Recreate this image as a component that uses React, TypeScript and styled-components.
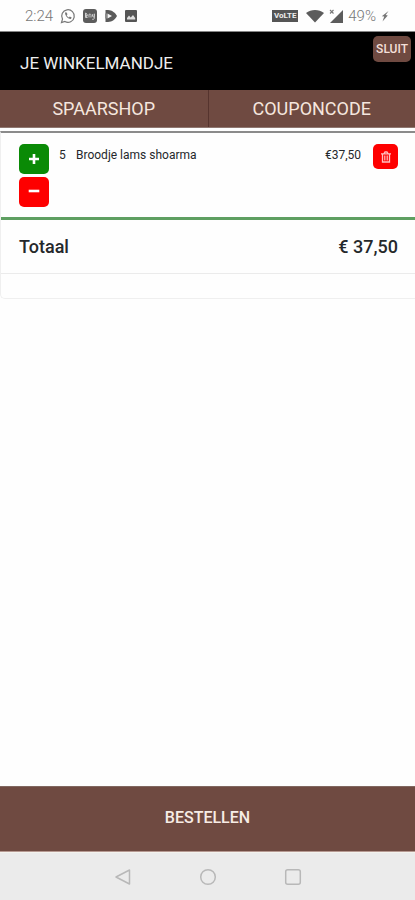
import React from "react";
import styled, { createGlobalStyle } from "styled-components";

const brown = "#6f4a41";

const GlobalStyle = createGlobalStyle`
  *, *::before, *::after { box-sizing: border-box; }
  body {
    margin: 0;
    background: #fefefe;
    color: #25282b;
    font-family: Roboto, "Liberation Sans", sans-serif;
  }
  button { font-family: inherit; cursor: pointer; }
`;

const Screen = styled.div`
  display: flex;
  flex-direction: column;
  min-height: 100vh;
`;

const StatusBar = styled.div`
  display: flex;
  justify-content: space-between;
  align-items: center;
  height: 32px;
  padding: 0 26px 0 25px;
  border-bottom: 1px solid #858585;
  background: #fefefe;
  color: #777;
  font-size: 15px;
  font-weight: 300;
`;

const StatusGroup = styled.div<{ $gap: number }>`
  display: flex;
  align-items: center;
  gap: ${(p) => p.$gap}px;
  svg { display: block; }
`;

const Header = styled.header`
  display: flex;
  justify-content: space-between;
  align-items: flex-start;
  height: 58px;
  padding: 4px 4px 0 20px;
  background: #000;
`;

const Title = styled.h1`
  margin: 16px 0 0;
  color: #eee;
  font-size: 17px;
  line-height: 22px;
  font-weight: 400;
`;

const CloseButton = styled.button`
  height: 26px;
  padding: 0 3px;
  border: 0;
  border-radius: 5px;
  background: ${brown};
  color: #f3dfd8;
  font-size: 12px;
  font-weight: 500;
`;

const Tabs = styled.nav`
  display: grid;
  grid-template-columns: 1fr 1fr;
  border-bottom: 1px solid #8f7770;
`;

const TabButton = styled.button`
  height: 37px;
  padding: 0;
  border: 0;
  background: ${brown};
  color: #f5e6de;
  font-size: 18px;
  & + & { border-left: 1px solid #56342e; }
`;

const Card = styled.section`
  margin-top: 3px;
  border: 1px solid #efefef;
  border-top: 2px solid #8b8b8b;
  border-right: 0;
  border-radius: 0 0 0 5px;
  background: #fefefe;
`;

const ItemRow = styled.div`
  display: flex;
  align-items: flex-start;
  min-height: 84px;
  padding: 11px 17px 0 18px;
  font-size: 12px;
  line-height: 22px;
`;

const Stepper = styled.div`
  display: flex;
  flex-direction: column;
  gap: 3px;
  margin-right: 10px;
`;

const IconButton = styled.button<{ $color: string; $size: number }>`
  display: flex;
  align-items: center;
  justify-content: center;
  width: ${(p) => p.$size}px;
  height: ${(p) => p.$size}px;
  padding: 0;
  border: 0;
  border-radius: 5px;
  background: ${(p) => p.$color};
`;

const Count = styled.span`
  width: 17px;
`;

const ItemName = styled.span`
  flex: 1;
`;

const ItemPrice = styled.span`
  margin-right: 12px;
`;

const TotalRow = styled.div`
  display: flex;
  justify-content: space-between;
  align-items: center;
  height: 57px;
  padding: 0 17px 1px 18px;
  border-top: 3px solid #5e9f61;
  border-bottom: 1px solid #ebebeb;
  font-size: 18px;
  font-weight: 500;
`;

const CardFooter = styled.div`
  height: 24px;
`;

const OrderButton = styled.button`
  height: 66px;
  margin-top: auto;
  padding: 0 0 3px;
  border: 0;
  border-top: 1px solid #806760;
  border-bottom: 1px solid #b69992;
  background: ${brown};
  color: #f7ece5;
  font-size: 16px;
  font-weight: 500;
`;

const SystemNav = styled.nav`
  display: flex;
  justify-content: center;
  gap: 61px;
  height: 48px;
  border-top: 1px solid #f3f2ed;
  background: #ebebeb;
`;

const SystemButton = styled.button`
  width: 24px;
  height: 47px;
  padding: 0;
  border: 0;
  background: none;
  svg { display: block; margin: auto; }
`;

const WhatsappIcon = () => (
  <svg width="16" height="16" viewBox="0 0 16 16" fill="none" stroke="#777" strokeWidth="1.2">
    <path d="M1.5 14.5l1-3.4a6.3 6.3 0 1 1 2.4 2.4z" />
    <path d="M5.3 4.3c-1.2 2.4 2.7 7 5.6 6.6l.8-1.4-1.9-1-1 .9c-.9-.4-1.7-1.3-2.1-2.2l.8-1-.9-1.8z" fill="#777" stroke="none" />
  </svg>
);

const AppIcon = () => (
  <svg width="14" height="14" viewBox="0 0 14 14">
    <rect width="14" height="14" rx="3" fill="#5c5c5c" />
    <path d="M2.5 4v4.5h1.8L3 6.4h1.6L3 4zM6 8.5V5.3c1.5-.6 2 .1 2 1v2.2M9.5 5.2v2c0 1 1.8 1 1.8 0V4.8v4.4c0 1.3-1.5 1.5-2.3.8" fill="none" stroke="#ccc" strokeWidth="1" />
  </svg>
);

const PlayIcon = () => (
  <svg width="14" height="14" viewBox="0 0 14 14">
    <path d="M1.5 1H4c4 0 7.5 3 9 6-1.500 3-5 6-9 6H1.500z" fill="#5a5a5a" />
    <path d="M3.500 4.500L8 7l-4.500 2.500z" fill="#f2f2f2" />
    <path d="M1 4.500h2v5H1z" fill="#8a8a8a" />
  </svg>
);

const PictureIcon = () => (
  <svg width="12" height="12" viewBox="0 0 12 12">
    <rect width="12" height="12" rx="1" fill="#555" />
    <path d="M2 9.5V8l2-2.500 1.700 2L8 5l2.200 3v1.500z" fill="#ddd" />
  </svg>
);

const VolteBadge = styled.span`
  display: flex;
  align-items: center;
  justify-content: center;
  width: 26px;
  height: 12px;
  margin-right: 3px;
  background: #555;
  color: #eee;
  font-size: 8px;
  font-weight: 700;
`;

const WifiIcon = () => (
  <svg width="18" height="14" viewBox="0 0 18 14">
    <path d="M0 4C5 0 13 0 18 4L9 13.5z" fill="#5c5c5c" />
  </svg>
);

const SignalIcon = () => (
  <svg width="14" height="14" viewBox="0 0 14 14">
    <path d="M14 1v13H1z" fill="#5c5c5c" />
    <path d="M1 1l3.5 3.5m0-3.5L1 4.5" stroke="#777" strokeWidth="1.1" />
  </svg>
);

const BoltIcon = () => (
  <svg width="8" height="12" viewBox="0 0 8 12">
    <path d="M7.5 1L.8 6.2l2.4.4L1.5 11.5l5.3-6-2.1-.4z" fill="#777" />
  </svg>
);

const PlusIcon = () => (
  <svg width="12" height="12" viewBox="0 0 12 12">
    <path d="M6 1v10M1 6h10" stroke="#fff" strokeWidth="2.6" />
  </svg>
);

const MinusIcon = () => (
  <svg width="12" height="12" viewBox="0 0 12 12">
    <path d="M2 5h8" stroke="#fff" strokeWidth="2.6" strokeLinecap="square" />
  </svg>
);

const TrashIcon = () => (
  <svg width="10" height="12" viewBox="0 0 10 12" fill="none" stroke="#ffc0c0">
    <path d="M0 2.800h10M3 2.500L4 1h2l1 1.500M1.500 3v8h7V3" strokeWidth="1.300" />
    <path d="M3.500 4.500v5M5 4.500v5M6.500 4.500v5" strokeWidth=".8" />
  </svg>
);

export default function App() {
  return (
    <Screen>
      <GlobalStyle />
      <StatusBar>
        <StatusGroup $gap={7}>
          <span>2:24</span>
          <WhatsappIcon />
          <AppIcon />
          <PlayIcon />
          <PictureIcon />
        </StatusGroup>
        <StatusGroup $gap={5}>
          <VolteBadge>VoLTE</VolteBadge>
          <WifiIcon />
          <SignalIcon />
          <span>49%</span>
          <BoltIcon />
        </StatusGroup>
      </StatusBar>
      <Header>
        <Title>JE WINKELMANDJE</Title>
        <CloseButton type="button">SLUIT</CloseButton>
      </Header>
      <Tabs>
        <TabButton type="button">SPAARSHOP</TabButton>
        <TabButton type="button">COUPONCODE</TabButton>
      </Tabs>
      <Card>
        <ItemRow>
          <Stepper>
            <IconButton type="button" $color="#0a8a06" $size={30} aria-label="Meer">
              <PlusIcon />
            </IconButton>
            <IconButton type="button" $color="#fe0000" $size={30} aria-label="Minder">
              <MinusIcon />
            </IconButton>
          </Stepper>
          <Count>5</Count>
          <ItemName>Broodje lams shoarma</ItemName>
          <ItemPrice>€37,50</ItemPrice>
          <IconButton type="button" $color="#fe0000" $size={25} aria-label="Verwijderen">
            <TrashIcon />
          </IconButton>
        </ItemRow>
        <TotalRow>
          <span>Totaal</span>
          <span>€ 37,50</span>
        </TotalRow>
        <CardFooter />
      </Card>
      <OrderButton type="button">BESTELLEN</OrderButton>
      <SystemNav>
        <SystemButton type="button" aria-label="Terug">
          <svg width="18" height="18" viewBox="0 0 18 18" fill="none" stroke="#b8b8b8" strokeWidth="1.5" strokeLinejoin="round">
            <path d="M15.5 2v14L2 9z" />
          </svg>
        </SystemButton>
        <SystemButton type="button" aria-label="Start">
          <svg width="18" height="18" viewBox="0 0 18 18" fill="none" stroke="#b8b8b8" strokeWidth="1.5">
            <circle cx="9" cy="9" r="7.3" />
          </svg>
        </SystemButton>
        <SystemButton type="button" aria-label="Recent">
          <svg width="18" height="18" viewBox="0 0 18 18" fill="none" stroke="#b8b8b8" strokeWidth="1.5">
            <rect x="1.7" y="1.7" width="14.6" height="14.6" rx="2" />
          </svg>
        </SystemButton>
      </SystemNav>
    </Screen>
  );
}
